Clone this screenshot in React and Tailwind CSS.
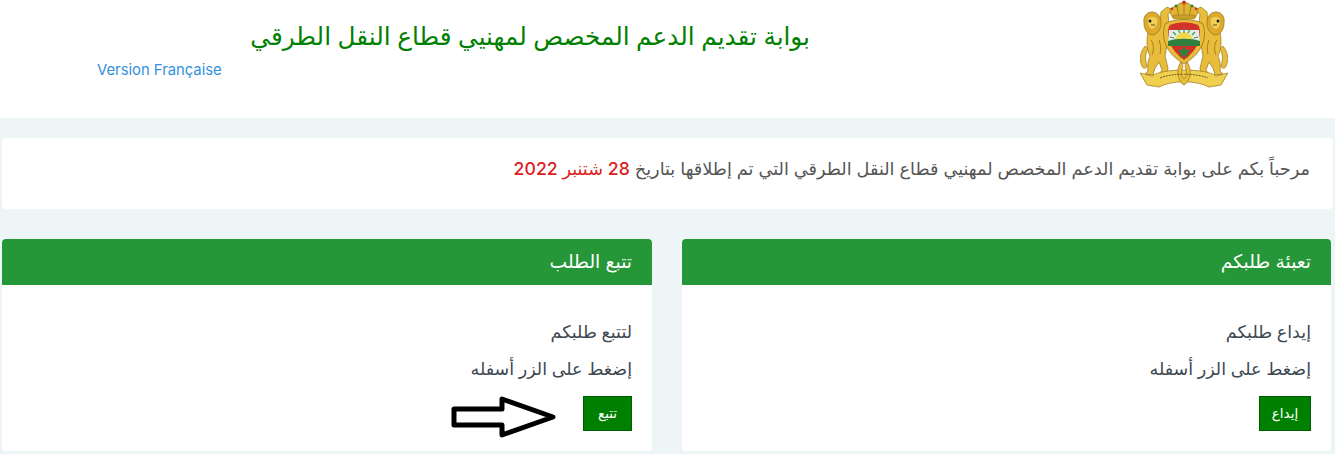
const G = "#e8bd3c", D = "#9a7416";
const Lion = () => (
  <g fill={G} stroke={D} strokeWidth="0.7" strokeLinejoin="round">
    <path d="M6 46 C1 52 0 60 3 66 C4 69 7 69 8 66 C6 60 6 54 9 49 Z" />
    <path d="M9 32 C7 42 8 50 11 56 C9 61 8 66 9 71 L6 74 L14 75 L16 68 L20 62 L23 70 L20 75 L28 75 L29 68 L26 56 C28 48 28 40 26 34 L30 24 L29 14 L34 10 L28 7 L22 12 L21 22 L18 28 Z" />
    <path d="M13 12 C7 12 4 17 5 23 C5 29 8 34 13 35 C18 35 22 30 22 23 C22 17 19 12 13 12 Z" fill="#dca92d" />
    <path d="M9 19 C11 16 16 16 18 19 C19 23 17 28 13 29 C10 28 8 23 9 19 Z" fill="#f0cf5a" stroke="none" />
    <circle cx="11" cy="21" r="1.5" fill="#222" stroke="none" />
    <path d="M12 25 L16 25" stroke="#6b4f10" strokeWidth="1" />
    <path d="M12 40 C15 44 15 50 13 55 M20 40 C22 45 22 50 21 54" fill="none" strokeWidth="0.8" />
  </g>
);
const crest = (
  <svg width="88" height="90" viewBox="0 0 88 90" aria-label="شعار المملكة المغربية">
    <g transform="translate(-1 0)"><Lion /></g>
    <g transform="translate(89 0) scale(-1 1)"><Lion /></g>
    <path d="M31 8 C29 11 31 15 33 18 H55 C57 15 59 11 57 8 L52 6 L48 3 H40 L36 6 Z" fill="#e2b233" stroke={D} strokeWidth="0.7" />
    <path d="M44 1 L44 18 M37 6 L39 18 M51 6 L49 18" stroke="#8a6a17" strokeWidth="0.7" />
    <path d="M33 15 H55 L54 19 H34 Z" fill="#c9a02a" stroke={D} strokeWidth="0.5" />
    <circle cx="44" cy="2.5" r="2" fill="#c9342f" />
    <circle cx="36" cy="6" r="1.4" fill="#2f7f3e" />
    <circle cx="52" cy="6" r="1.4" fill="#2f7f3e" />
    <circle cx="32" cy="9" r="1.2" fill="#c9342f" />
    <circle cx="56" cy="9" r="1.2" fill="#c9342f" />
    <path d="M25 24 C33 18 55 18 63 24 C67 36 64 52 44 64 C24 52 21 36 25 24 Z" fill={G} stroke={D} strokeWidth="0.8" />
    <path d="M29 26 C36 21 52 21 59 26 C62 37 59 49 44 60 C29 49 26 37 29 26 Z" fill="#d3312c" />
    <path d="M29 30 H59 L60 43 H28 Z" fill="#dfeee6" />
    <path d="M35 41 A9 9 0 0 1 53 41 Z" fill="#f2d84a" />
    <g stroke="#3f8f57" strokeWidth="1.1">
      <path d="M44 28 V33 M38 29 L40 33 M50 29 L48 33 M33 32 L36 35 M55 32 L52 35 M30 37 L34 38 M58 37 L54 38" />
    </g>
    <path d="M28 41 C36 38 52 38 60 41 L60 46 H28 Z" fill="#2f7f3e" />
    <path d="M44 46 L46 50 L51 50 L47 53 L48.5 58 L44 55 L39.5 58 L41 53 L37 50 L42 50 Z" fill="#2f7f3e" />
    <path d="M12 76 L0 73 L7 85 L19 87 C32 80 56 80 69 87 L81 85 L88 73 L76 76 C66 68 22 68 12 76 Z" fill="#f0d04e" stroke={D} strokeWidth="0.7" />
    <path d="M41 62 C35 70 38 82 44 85 C50 82 53 70 47 62 L45 66 C47 71 47 76 44 79 C41 76 41 71 43 66 Z" fill={G} stroke={D} strokeWidth="0.7" />
    <path d="M20 78 C32 73 56 73 68 78" fill="none" stroke="#6d5a18" strokeWidth="1" strokeDasharray="2 1" />
  </svg>
);

const Card = ({ title, l1, l2, btn, btnW, arrow }) => (
  <section className="bg-white rounded-[4px] overflow-hidden">
    <h2 className="h-[46px] bg-[#259738] text-white text-[18.7px] flex items-center px-5 font-normal">{title}</h2>
    <div className="px-5 pt-[28px] h-[166px] text-[#3d4852] text-[17.5px] font-medium">
      <p className="h-[37px] leading-[37px]">{l1}</p>
      <p className="h-[37px] leading-[37px]">{l2}</p>
      <div className="flex items-start mt-[9px] gap-[26px]">
        <button className={`${btnW} h-[35px] bg-[#008000] border border-[#005c00] text-white text-[13.5px] font-normal`}>{btn}</button>
        {arrow && (
          <svg width="106" height="42" viewBox="0 0 106 42" className="shrink-0">
            <path d="M3 13 H51 V3 L102 21 L51 39 V29 H3 Z" fill="white" stroke="black" strokeWidth="5" strokeLinejoin="round" />
          </svg>
        )}
      </div>
    </div>
  </section>
);

export default function App() {
  return (
    <div dir="rtl" className="w-[1335px] h-[454px] overflow-hidden bg-[#edf5f7]" style={{ fontFamily: 'Inter, "Noto Sans", "DejaVu Sans", sans-serif' }}>
      <header className="h-[118px] bg-white flex items-start">
        <div className="w-[88px] mr-[107px]">{crest}</div>
        <div className="mr-[330px] mt-[17px] w-[558px] flex flex-col">
          <h1 className="text-[24.7px] leading-[38px] font-medium text-[#008000] whitespace-nowrap">بوابة تقديم الدعم المخصص لمهنيي قطاع النقل الطرقي</h1>
          <a dir="ltr" className="mt-[4px] text-[14.8px] leading-[22px] text-[#3490dc] self-end ml-[-155px] whitespace-nowrap">Version Française</a>
        </div>
      </header>
      <div className="mx-[2px] mt-[20px] h-[71px] bg-white rounded-[4px] pr-[23px] pt-[18px] text-[17.7px] leading-[26px] text-[#555]">
        مرحباً بكم على بوابة تقديم الدعم المخصص لمهنيي قطاع النقل الطرقي التي تم إطلاقها بتاريخ <span className="text-[#dc2020] font-medium">28 شتنبر 2022</span>
      </div>
      <div className="flex justify-between mx-[4px] ml-[2px] mt-[30px]">
        <div className="w-[649px]"><Card title="تعبئة طلبكم" l1="إيداع طلبكم" l2="إضغط على الزر أسفله" btn="إيداع" btnW="w-[52px]" /></div>
        <div className="w-[650px]"><Card title="تتبع الطلب" l1="لتتبع طلبكم" l2="إضغط على الزر أسفله" btn="تتبع" btnW="w-[49px]" arrow /></div>
      </div>
    </div>
  );
}
